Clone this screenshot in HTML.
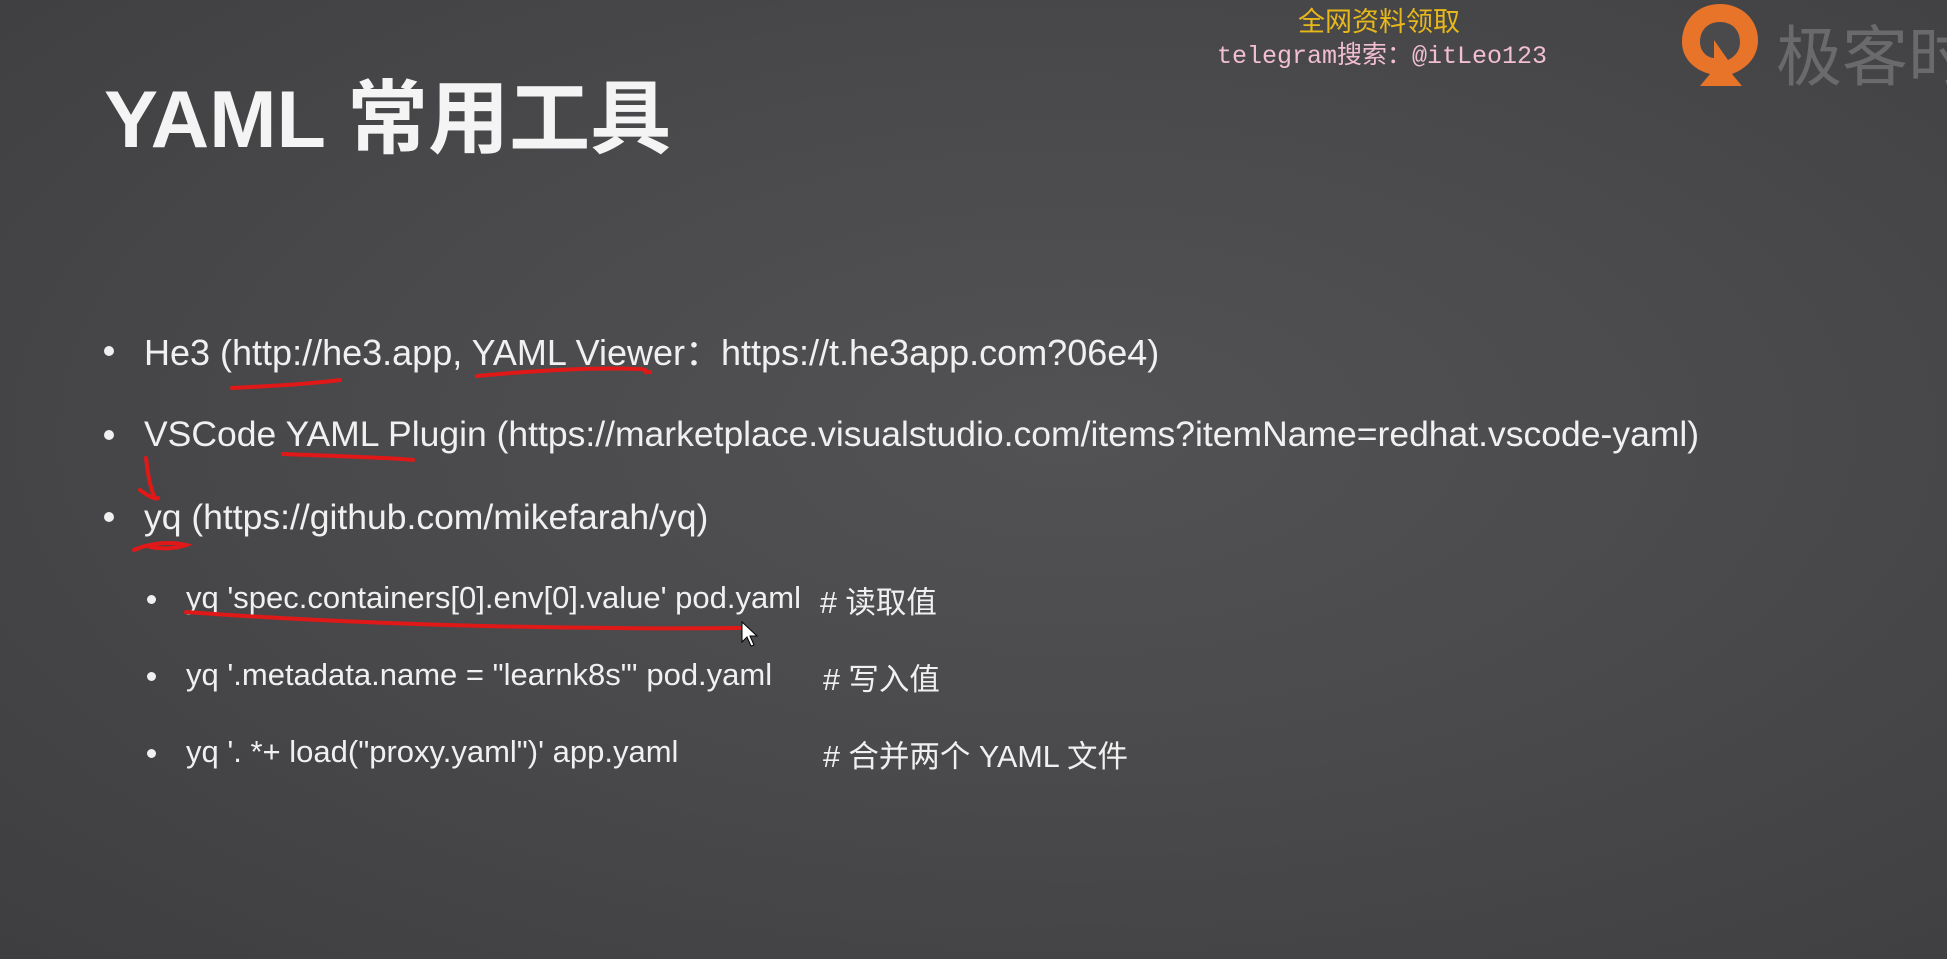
<!DOCTYPE html>
<html><head><meta charset="utf-8"><style>
html,body{margin:0;padding:0}
body{width:1947px;height:959px;overflow:hidden;position:relative;
background:radial-gradient(ellipse at 55% 45%,#525254 0%,#4a4a4c 45%,#3e3e40 100%);
font-family:"Liberation Sans","Noto Sans CJK SC",sans-serif;color:#f2f2f2}
.a{position:absolute;white-space:nowrap}
.t{left:104px;top:54px;font-size:81px;font-family:"Liberation Sans","Noto Sans CJK SC",sans-serif;font-weight:bold;color:#f4f4f4}
.l{color:#f0f0f0}
.s{font-size:31px;color:#f0f0f0}
.c{font-size:30.5px;color:#f0f0f0}
.d{position:absolute;width:10px;height:10px;border-radius:50%;background:#f0f0f0}
.ds{width:9px;height:9px}
</style></head><body>
<div class="a t">YAML 常用工具</div>

<div class="a" style="left:1298px;top:0px;font-size:27px;color:#e8b81a;font-family:'Noto Sans CJK SC',sans-serif">全网资料领取</div>
<div class="a" style="left:1217px;top:35px;font-size:25px;color:#f2bfd0;font-family:'Liberation Mono','Noto Sans CJK SC',monospace">telegram搜索：@itLeo123</div>
<svg class="a" style="left:1670px;top:0" width="100" height="90" viewBox="0 0 100 90">
<path d="M50 4 C26 4 12 22 12 42 C12 58 24 70 40 74 L30 86 L72 86 L62 74 C78 68 88 56 88 40 C88 20 72 4 50 4 Z" fill="#e8742a"/>
<path d="M50 22 C36 22 30 32 30 42 C30 52 38 58 44 58 L44 40 L58 60 C66 56 70 50 70 42 C70 30 62 22 50 22Z" fill="#4a4a4c"/>
</svg>
<div class="a" style="left:1776px;top:4px;font-size:66px;color:#6a6a6c;font-family:'Noto Sans CJK SC',sans-serif">极客时</div>

<div class="d" style="left:104px;top:346px"></div>
<div class="a l" style="left:144px;top:324px;font-size:36px">He3 (http://he3.app, YAML Viewer：https://t.he3app.com?06e4)</div>
<div class="d" style="left:104px;top:430px"></div>
<div class="a l" style="left:144px;top:414px;font-size:35.5px">VSCode YAML Plugin (https://marketplace.visualstudio.com/items?itemName=redhat.vscode-yaml)</div>
<div class="d" style="left:104px;top:512px"></div>
<div class="a l" style="left:144px;top:497px;font-size:35.5px">yq (https://github.com/mikefarah/yq)</div>

<div class="d ds" style="left:147px;top:595px"></div>
<div class="a s" style="left:186px;top:580px">yq 'spec.containers[0].env[0].value' pod.yaml</div>
<div class="a c" style="left:820px;top:578px">#&nbsp;读取值</div>
<div class="d ds" style="left:147px;top:672px"></div>
<div class="a s" style="left:186px;top:657px">yq '.metadata.name = "learnk8s"' pod.yaml</div>
<div class="a c" style="left:823px;top:655px">#&nbsp;写入值</div>
<div class="d ds" style="left:147px;top:749px"></div>
<div class="a s" style="left:186px;top:734px">yq '. *+ load("proxy.yaml")' app.yaml</div>
<div class="a c" style="left:823px;top:732px">#&nbsp;合并两个 YAML 文件</div>

<svg class="a" style="left:0;top:0" width="1947" height="959" fill="none" stroke="#e01818" stroke-width="4" stroke-linecap="round">
<path d="M232 388 C270 386 310 384 340 380"/>
<path d="M477 376 C530 371 590 367 640 369 C652 370 640 373 650 372"/>
<path d="M283 454 C330 456 380 457 413 460"/>
<path d="M146 458 C148 475 150 488 155 498 M140 490 C148 496 156 500 158 498"/>
<path d="M134 550 C150 543 170 541 186 545 C175 549 160 549 150 547"/>
<path d="M186 612 C320 622 520 630 742 628"/>
</svg>
<svg class="a" style="left:740px;top:620px" width="20" height="30"><path d="M2 2 L2 22 L7 17 L11 26 L14 25 L10 16 L17 16 Z" fill="#fff" stroke="#000" stroke-width="1"/></svg>
</body></html>
